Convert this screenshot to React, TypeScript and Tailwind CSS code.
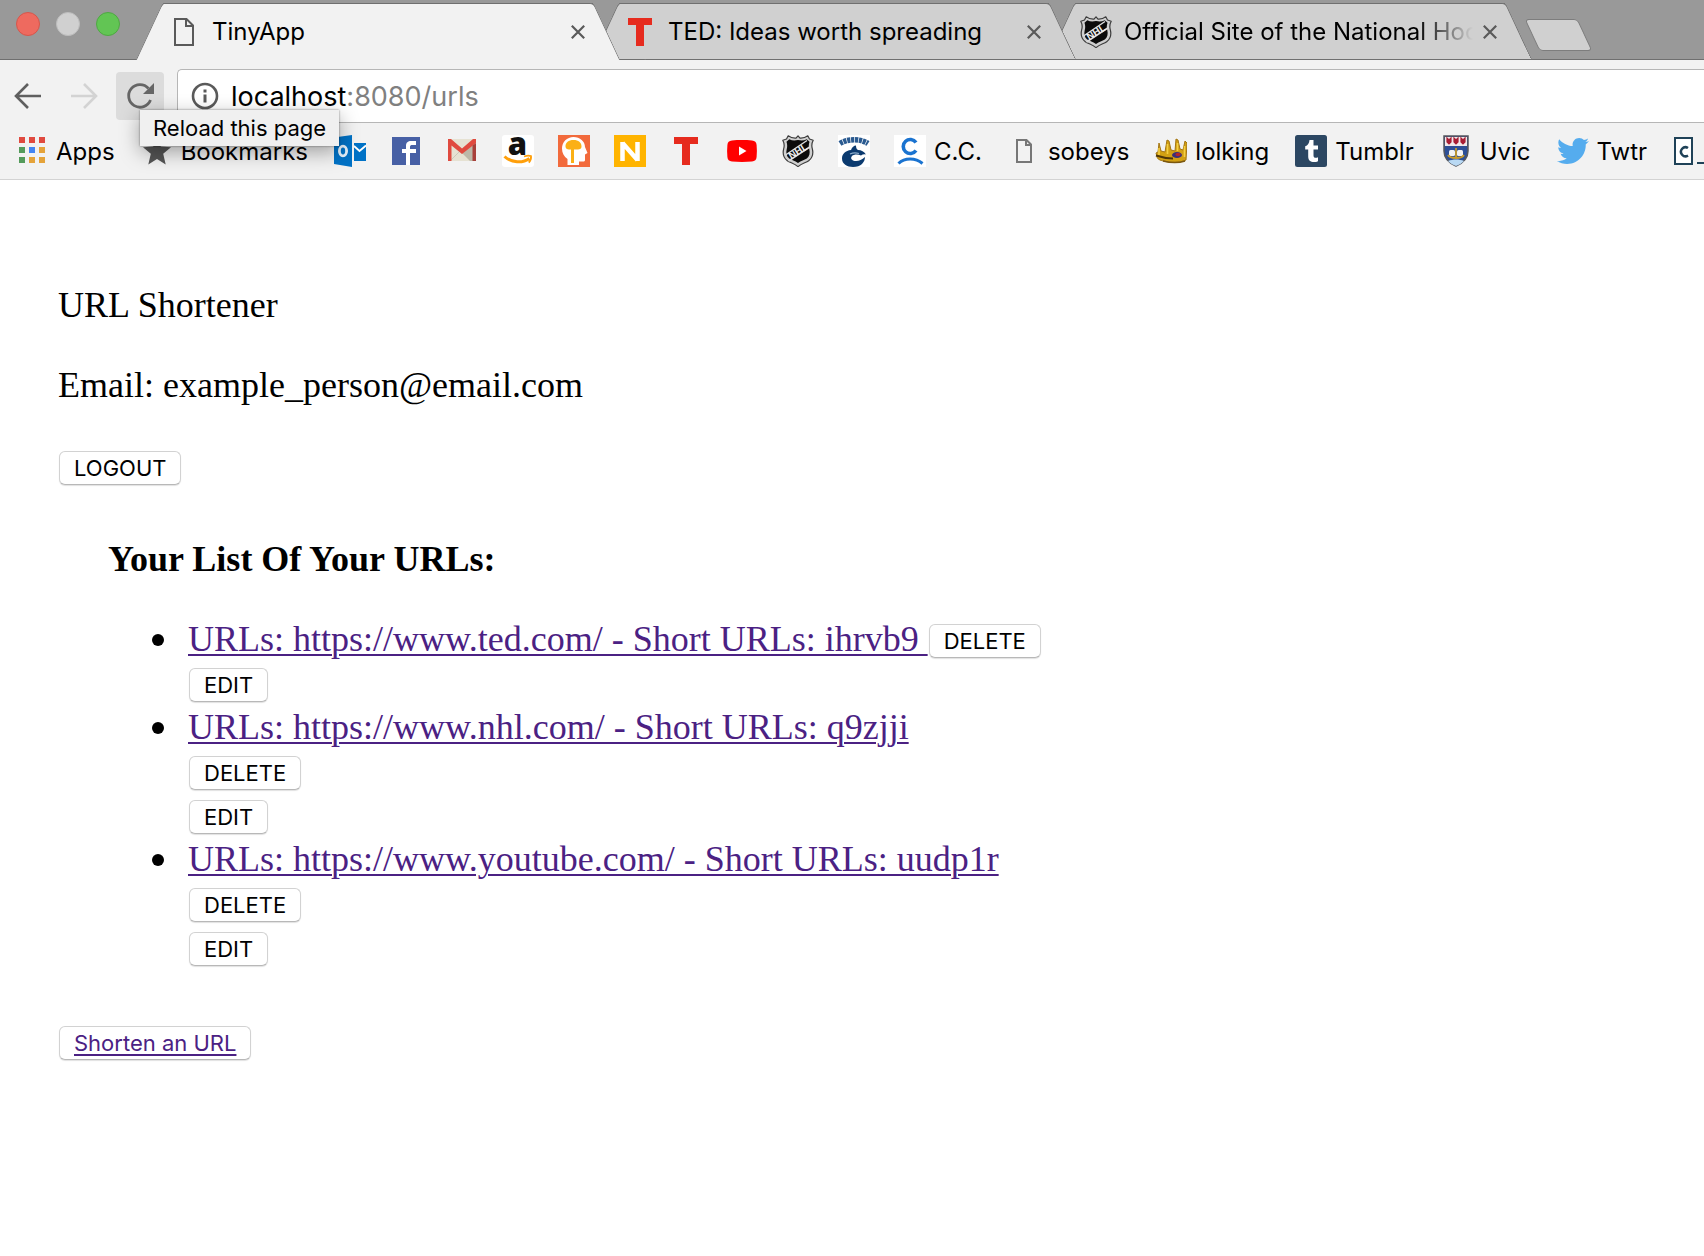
import type { ReactNode } from 'react'
import { FaTwitter } from 'react-icons/fa'

/* ---------- icons ---------- */

function DocIcon({ small = false }: { small?: boolean }) {
  return small ? (
    <svg viewBox="0 0 32 32" className="size-8 shrink-0" fill="none" stroke="#777" strokeWidth="2" aria-hidden="true">
      <path d="M9 5h9.5l4.500 4.500V27H9z" />
      <path d="M18 5v5h5" />
    </svg>
  ) : (
    <svg viewBox="0 0 32 32" className="size-8 shrink-0" fill="none" stroke="#5a5a5a" strokeWidth="2" aria-hidden="true">
      <path d="M7 3h11.500l6.500 6.500V29H7z" />
      <path d="M18 3v7h7" />
    </svg>
  )
}

function TedIcon() {
  return (
    <svg viewBox="0 0 32 32" className="size-8 shrink-0" aria-hidden="true">
      <path fill="#e62b1e" d="M4 2h24v7h-8v21h-8V9H4z" />
    </svg>
  )
}

function NhlIcon() {
  const shield =
    'M16 .8l2 2.300c3 .2 5.200-.3 7.800-2.300l1.700 3.200 3.700 1.300c-1.600 3-1.800 5.400-.9 8.400 1 4 .4 9-3.600 12-3 2.200-6.600 2.300-10.700 5.900-4.100-3.600-7.700-3.700-10.700-5.900-4-3-4.600-8-3.600-12 .9-3 .7-5.400-.9-8.400l3.700-1.300 1.700-3.200c2.600 2 4.800 2.500 7.800 2.300z'
  return (
    <svg viewBox="0 0 32 32" className="size-8 shrink-0" aria-hidden="true">
      <path d={shield} fill="#cfcfcf" stroke="#3d3d3d" strokeWidth="1.200" strokeLinejoin="round" />
      <path
        d="M16 5c3.500.8 6 .6 8.700-.8l2.800 2.500c-.9 3-.9 5-.2 7.600.9 3.600.2 7.200-2.500 9.300-2.500 1.700-5.600 2-8.800 4.500-3.200-2.500-6.300-2.800-8.800-4.500-2.700-2.100-3.400-5.700-2.500-9.300.7-2.600.7-4.600-.2-7.600l2.800-2.500c2.700 1.400 5.200 1.600 8.700.8z"
        fill="#0b0b0b"
      />
      <path d="M3.500 20L25 5.500M6.500 26L28.500 11.500" stroke="#ddd" strokeWidth="1.500" />
      <text
        x="16"
        y="19.500"
        textAnchor="middle"
        transform="rotate(-33 16 16)"
        fontFamily="Liberation Sans, sans-serif"
        fontWeight="700"
        fontSize="10"
        fill="#eee"
      >
        NHL
      </text>
    </svg>
  )
}

function AppsIcon() {
  const colors = ['#e04a3f', '#e04a3f', '#e04a3f', '#549b5b', '#4285f4', '#e5a33a', '#549b5b', '#e5a33a', '#e5a33a']
  return (
    <svg viewBox="0 0 32 32" className="size-8 shrink-0" aria-hidden="true">
      {colors.map((c, i) => (
        <rect key={i} x={3 + (i % 3) * 10} y={2 + Math.floor(i / 3) * 10} width="6" height="6" fill={c} />
      ))}
    </svg>
  )
}

function StarIcon() {
  return (
    <svg viewBox="0 0 32 32" className="size-8 shrink-0" aria-hidden="true">
      <path fill="#555" d="M16 2l3.800 9.400 10.200.8-7.800 6.500 2.500 10.900-8.700-5.600-8.700 5.600 2.500-10.900L2 12.200l10.200-.8z" />
    </svg>
  )
}

function OutlookIcon() {
  return (
    <svg viewBox="0 0 32 32" className="size-8 shrink-0" aria-hidden="true">
      <path fill="#0072c6" d="M0 2.500L18 0v32L0 29z" />
      <rect x="20" y="8" width="12" height="18" fill="#0072c6" />
      <path d="M20 11l5.500 5L32 10.500" fill="none" stroke="#fff" strokeWidth="1.800" />
      <ellipse cx="9" cy="16" rx="3.600" ry="4.800" fill="none" stroke="#e3f0fa" strokeWidth="2.800" />
    </svg>
  )
}

function FacebookIcon() {
  return (
    <svg viewBox="0 0 32 32" className="size-8 shrink-0" aria-hidden="true">
      <rect x="2" y="2" width="28" height="28" fill="#4760a5" />
      <path fill="#fff" d="M16 30V18h-4v-4h4v-3c0-3.600 2-5 5-5h5v4h-3.500c-1.800 0-2.500.5-2.500 2v2h6v4h-6v12z" />
    </svg>
  )
}

function GmailIcon() {
  return (
    <svg viewBox="0 0 32 32" className="size-8 shrink-0" aria-hidden="true">
      <rect x="2" y="4" width="28" height="22" fill="#e6e2d3" />
      <path d="M4 26l9-9" stroke="#cdc9ba" strokeWidth="1" />
      <path d="M16 18L28 9v17h-4z" fill="#bcb8a8" />
      <path d="M2 4h3l11 9.500L27 4h3v4L16 19 5.500 10.500V26H2z" fill="#e04a3f" />
      <path d="M26.500 10.500L30 8v18h-3.500z" fill="#a8403a" />
    </svg>
  )
}

function AmazonIcon() {
  return (
    <svg viewBox="0 0 32 32" className="size-8 shrink-0" aria-hidden="true">
      <rect width="32" height="32" rx="3" fill="#fff" />
      <text x="15.500" y="19.500" textAnchor="middle" fontFamily="Open Sans, sans-serif" fontWeight="800" fontSize="31" fill="#111">
        a
      </text>
      <path d="M2.500 21.500c7 6.500 18 7 25 2" fill="none" stroke="#ff9f0a" strokeWidth="3" />
      <path d="M22 21.500c3-1 5.500-1 7-.4.3 2-.4 4.500-2.200 6.500" fill="none" stroke="#ff9f0a" strokeWidth="1.800" />
    </svg>
  )
}

function HeadIcon() {
  return (
    <svg viewBox="0 0 32 32" className="size-8 shrink-0" aria-hidden="true">
      <rect width="32" height="32" fill="#f26a3c" />
      <path fill="#fff" d="M9.500 30V24C6 21.500 4 18 4 13.500 4 7 9 2 15.500 2S27 6.500 27 12l2.500 6-2.500 1.500V25c0 1-.8 1.500-1.800 1.500H21V30z" />
      <path fill="#fbb016" d="M7.500 11.500C7.500 7.500 10.500 5 15.500 5s8 2.500 8 6.500c0 2.200-1.500 3-3.500 3h-4V28h-3V14.500h-2c-2 0-3.500-1-3.500-3z" />
    </svg>
  )
}

function LetterNIcon() {
  return (
    <svg viewBox="0 0 32 32" className="size-8 shrink-0" aria-hidden="true">
      <rect width="32" height="32" fill="#ffb400" />
      <path d="M8.500 26V7M23.500 26V7M8.500 8l15 17" fill="none" stroke="#fff" strokeWidth="4.500" />
    </svg>
  )
}

function YoutubeIcon() {
  return (
    <svg viewBox="0 0 32 32" className="size-8 shrink-0" aria-hidden="true">
      <path fill="#f00" d="M6 5.500c6-.6 14-.6 20 0 3 .3 4.300 1.500 4.600 4.500.4 4 .4 8 0 12-.3 3-1.600 4.200-4.600 4.500-6 .6-14 .6-20 0-3-.3-4.300-1.500-4.600-4.500-.4-4-.4-8 0-12 .3-3 1.600-4.200 4.600-4.500z" />
      <path fill="#fff" d="M13 11.500l7.500 4.500-7.500 4.500z" />
    </svg>
  )
}

function CanucksIcon() {
  return (
    <svg viewBox="0 0 32 32" className="size-8 shrink-0" aria-hidden="true">
      <rect width="32" height="32" fill="#fff" />
      <path d="M2 8.500c8-5 20-5 28 0" fill="none" stroke="#2a5a90" strokeWidth="5.500" strokeDasharray="3.200 .7" />
      <path
        fill="#0b3a6f"
        d="M13 15c1-3 3-4.500 5-4.500 0 2 .5 3.500 2 4.500 3.500 0 6 1.500 8 4.500-2-.5-3.500 0-5 1-3-1.500-7-1.500-9 .5-1.500 1.500-1 3.500 1 4.500 4 1.500 8 0 12-3.500 0 5-4 10-12 10-6 0-11-3-11-8.500C4 19 7.500 15.500 13 15z"
      />
      <path d="M12 19c3-1.500 6-1.500 9-.5" stroke="#8fb0cf" strokeWidth="1.200" fill="none" />
    </svg>
  )
}

function PersonIcon() {
  return (
    <svg viewBox="0 0 32 32" className="size-8 shrink-0" fill="none" stroke="#1a73d0" aria-hidden="true">
      <rect width="32" height="32" fill="#fff" stroke="none" />
      <path d="M22 7.500a7 7 0 1 0 0 8" strokeWidth="3.600" />
      <path d="M4.500 28.500c6-6 17-6 24 0" strokeWidth="3" />
    </svg>
  )
}

function CrownIcon() {
  return (
    <svg viewBox="0 0 32 32" className="size-8 shrink-0" aria-hidden="true">
      <path
        fill="#d2a013"
        stroke="#a37512"
        strokeWidth="1"
        d="M1 18l2-1 1-9 2 8 4 1 2-12 2 1 2 9 4 1 1-12 2 1 2 9 3 1 2-9 2 2-1 17c-6 3-16 3-22 1-4-.5-7-2-7-4.500z"
      />
      <path d="M4 13v7M12.500 9v10M22.500 8v8M29.500 11v11" stroke="#f4cf45" strokeWidth="1.600" />
      <path d="M1 20.500c6 2 12 3 17 3" stroke="#4f3608" strokeWidth="2" fill="none" />
      <path d="M8 26c8 2 16 2 22 0" stroke="#7a570f" strokeWidth="1.600" fill="none" />
      <ellipse cx="22" cy="20" rx="5" ry="3" fill="#3b2f7a" />
      <ellipse cx="23" cy="19.500" rx="2.500" ry="1.800" fill="#b3242c" />
    </svg>
  )
}

function TumblrIcon() {
  return (
    <svg viewBox="0 0 32 32" className="size-8 shrink-0" aria-hidden="true">
      <rect width="32" height="32" rx="2.500" fill="#2c4762" />
      <path fill="#fff" d="M14.500 5h4v5.500h4.500v4h-4.500v6c0 1.700.8 2.300 2.300 2.300.9 0 1.500-.2 2.200-.6v4c-1.200.6-2.400.9-4 .9-3.600 0-5.800-1.800-5.800-5.600v-7h-3v-3.200c2.700-.9 4-3 4.300-6.300z" />
    </svg>
  )
}

function CrestIcon() {
  return (
    <svg viewBox="0 0 32 32" className="size-8 shrink-0" aria-hidden="true">
      <path d="M4 1h24v15c0 7-5 12-12 15C9 28 4 23 4 16z" fill="#2d4f96" stroke="#55575e" strokeWidth="1.500" />
      <path d="M5 2h22v9H5z" fill="#f1e9ea" />
      <path d="M7 3v4l2 2 2-2V3l-2 2zM14 3v4l2 2 2-2V3l-2 2zM21 3v4l2 2 2-2V3l-2 2z" fill="#a81e35" stroke="#a81e35" strokeWidth="1.200" />
      <path d="M8 26c5-2 11-2 16 0-2 2-5 4-8 5-3-1-6-3-8-5z" fill="#b9d9f3" />
      <rect x="9" y="15" width="6" height="6" rx="1.500" fill="#f2f2f2" />
      <rect x="17" y="15" width="6" height="6" rx="1.500" fill="#f2f2f2" />
      <path d="M8 20c2 4 14 4 16 0M16 13v11" stroke="#c79a2c" strokeWidth="1.800" fill="none" />
    </svg>
  )
}

function CodeIcon() {
  return (
    <svg viewBox="0 0 32 32" className="size-8 shrink-0" fill="none" stroke="#1f4258" aria-hidden="true">
      <path d="M2 3h17v26H2z" strokeWidth="2" fill="#fff" />
      <path d="M15 13a4.500 4.500 0 1 0 0 7.500" strokeWidth="2.500" />
      <path d="M24 28h8" strokeWidth="2" />
    </svg>
  )
}

function ArrowIcon({ forward = false }: { forward?: boolean }) {
  return (
    <svg viewBox="0 0 32 32" className="size-8" fill="none" stroke={forward ? '#d3d3d3' : '#5f5f5f'} strokeWidth="2.600" aria-hidden="true">
      {forward ? <path d="M3 16h24M16 4l12 12-12 12" /> : <path d="M29 16H5M16 4L4 16l12 12" />}
    </svg>
  )
}

function ReloadIcon() {
  return (
    <svg viewBox="0 0 32 32" className="size-8" aria-hidden="true">
      <path d="M26.500 20A11.300 11.300 0 1 1 24.500 8.500" fill="none" stroke="#666" strokeWidth="2.800" />
      <path d="M30 3v11H19z" fill="#666" />
    </svg>
  )
}

function InfoIcon() {
  return (
    <svg viewBox="0 0 28 28" className="size-7 shrink-0" aria-hidden="true">
      <circle cx="14" cy="14" r="12" fill="none" stroke="#5a5a5a" strokeWidth="2.600" />
      <path d="M14 7.500v3M14 12.500v8" stroke="#5a5a5a" strokeWidth="3" />
    </svg>
  )
}

/* ---------- browser chrome ---------- */

type TabProps = { title: string; icon: ReactNode; active?: boolean; fade?: boolean; order: string }

function Tab({ title, icon, active = false, fade = false, order }: TabProps) {
  const edge = active ? 'bg-[#f2f2f2] border-[#6f6f6f]' : 'bg-[#d0d0d0] border-[#6f6f6f] border-b'
  return (
    <div className={`relative h-[57px] w-[484px] min-w-0 not-first:-ml-7 ${order}`}>
      <span className={`absolute inset-y-0 right-10 left-[13px] -skew-x-[25deg] rounded-tl-[4px] border-t border-l ${edge}`} />
      <span className={`absolute inset-y-0 right-[13px] left-10 skew-x-[25deg] rounded-tr-[4px] border-t border-r ${edge}`} />
      <div className="relative flex h-full items-center pr-[35px] pl-8">
        <button type="button" className="flex min-w-0 flex-1 items-center gap-3 text-left">
          {icon}
          <span
            className={`min-w-0 flex-1 overflow-hidden whitespace-nowrap ${
              fade ? '[mask-image:linear-gradient(to_right,black_calc(100%-56px),transparent)]' : ''
            }`}
          >
            {title}
          </span>
        </button>
        <button type="button" aria-label={`Close ${title}`} className="ml-2.5 shrink-0">
          <svg viewBox="0 0 14 14" className="size-3.5" stroke="#5a5a5a" strokeWidth="2.200" aria-hidden="true">
            <path d="M.8.8l12.400 12.400M13.200.8L.8 13.200" />
          </svg>
        </button>
      </div>
    </div>
  )
}

const bookmarks: { name: string; label?: string; icon: ReactNode }[] = [
  { name: 'Apps', label: 'Apps', icon: <AppsIcon /> },
  { name: 'Bookmarks', label: 'Bookmarks', icon: <StarIcon /> },
  { name: 'Outlook', icon: <OutlookIcon /> },
  { name: 'Facebook', icon: <FacebookIcon /> },
  { name: 'Gmail', icon: <GmailIcon /> },
  { name: 'Amazon', icon: <AmazonIcon /> },
  { name: 'Lumosity', icon: <HeadIcon /> },
  { name: 'N', icon: <LetterNIcon /> },
  { name: 'TED', icon: <TedIcon /> },
  { name: 'YouTube', icon: <YoutubeIcon /> },
  { name: 'NHL', icon: <NhlIcon /> },
  { name: 'Canucks', icon: <CanucksIcon /> },
  { name: 'C.C.', label: 'C.C.', icon: <PersonIcon /> },
  { name: 'sobeys', label: 'sobeys', icon: <DocIcon small /> },
  { name: 'lolking', label: 'lolking', icon: <CrownIcon /> },
  { name: 'Tumblr', label: 'Tumblr', icon: <TumblrIcon /> },
  { name: 'Uvic', label: 'Uvic', icon: <CrestIcon /> },
  { name: 'Twtr', label: 'Twtr', icon: <FaTwitter className="size-8 shrink-0 text-[#55acee]" aria-hidden="true" /> },
  { name: 'Code', icon: <CodeIcon /> },
]

function BrowserChrome() {
  return (
    <header className="bg-[#f2f2f2] font-[Inter,sans-serif] text-[24px] leading-8 text-black">
      <div className="flex h-[60px] items-end border-b border-[#6f6f6f] bg-[#999]">
        <div className="flex w-[136px] shrink-0 gap-4 self-start pt-3 pl-4">
          <button type="button" aria-label="Close window" className="size-6 rounded-full border border-[#d5564c] bg-[#ee6a5f]" />
          <button type="button" aria-label="Minimize window" className="size-6 rounded-full border border-[#bdbdbd] bg-[#d0d0d0]" />
          <button type="button" aria-label="Zoom window" className="size-6 rounded-full border border-[#4fa843] bg-[#62c554]" />
        </div>
        <nav aria-label="Tabs" className="-mb-px flex min-w-0">
          <Tab title="TinyApp" icon={<DocIcon />} active order="z-30" />
          <Tab title="TED: Ideas worth spreading" icon={<TedIcon />} order="z-20" />
          <Tab title="Official Site of the National Hockey League" icon={<NhlIcon />} fade order="z-10" />
        </nav>
        <button
          type="button"
          aria-label="New tab"
          className="mb-2 h-8 w-[53px] shrink-0 skew-x-[25deg] rounded-[4px] border border-[#7d7d7d] bg-[#d0d0d0]"
        />
      </div>

      <div className="flex items-center gap-[13px] pt-[9px] pl-1">
        <div className="flex gap-2">
          <button type="button" aria-label="Back" className="flex size-12 items-center justify-center">
            <ArrowIcon />
          </button>
          <button type="button" aria-label="Forward" className="flex size-12 items-center justify-center">
            <ArrowIcon forward />
          </button>
          <div className="relative">
            <button type="button" aria-label="Reload" aria-describedby="reload-tip" className="flex size-12 items-center justify-center rounded-[4px] bg-[#dcdcdc]">
              <ReloadIcon />
            </button>
            <div
              id="reload-tip"
              role="tooltip"
              className="absolute top-[38px] left-6 z-40 bg-[#f0f0f0] px-[13px] text-[22px] leading-9 whitespace-nowrap shadow-[0_0_2px_rgba(0,0,0,0.45),0_6px_20px_rgba(0,0,0,0.35)]"
            >
              Reload this page
            </div>
          </div>
        </div>
        <div className="flex h-[54px] flex-1 items-center gap-3 rounded-l-[5px] border-y border-l border-[#b6b6b6] bg-white pl-[13px] text-[27px]">
          <InfoIcon />
          <a href="#address" className="pt-0.5 whitespace-nowrap text-black">
            localhost<span className="text-[#808080]">:8080/urls</span>
          </a>
        </div>
      </div>

      <nav aria-label="Bookmarks" className="flex h-[57px] items-center gap-6 overflow-hidden border-b border-[#d3d3d3] pl-4">
        {bookmarks.map((b) => (
          <a key={b.name} href="#bookmark" aria-label={b.name} className="flex h-9 shrink-0 items-center gap-2">
            {b.icon}
            {b.label && <span className="pt-0.5 pr-0.5">{b.label}</span>}
          </a>
        ))}
      </nav>
    </header>
  )
}

/* ---------- page ---------- */

const pushButton =
  'mx-px h-[34px] rounded-[6px] border border-[#d2d2d2] border-b-[#b8b8b8] bg-white px-[14px] font-[Inter,sans-serif] text-[22px] leading-8 shadow-[0_1px_1px_rgba(0,0,0,0.12)]'

function PushButton({ children }: { children: ReactNode }) {
  return (
    <button type="button" className={`${pushButton} text-black`}>
      {children}
    </button>
  )
}

const urls = [
  { long: 'https://www.ted.com/', short: 'ihrvb9', inline: true },
  { long: 'https://www.nhl.com/', short: 'q9zjji', inline: false },
  { long: 'https://www.youtube.com/', short: 'uudp1r', inline: false },
]

export default function App() {
  return (
    <div className="min-h-screen bg-white">
      <BrowserChrome />
      <main className="px-[58px] pt-[105px] pb-16 font-['Liberation_Serif',serif] text-[36px] leading-10 text-black">
        <p>URL Shortener</p>
        <p className="mt-10">Email: example_person@email.com</p>
        <form className="mt-[46px] flex" onSubmit={(e) => e.preventDefault()}>
          <PushButton>LOGOUT</PushButton>
        </form>

        <section className="mt-[54px] pl-[50px]">
          <h1 className="font-bold">Your List Of Your URLs:</h1>
          <ul className="mt-10 pl-11">
            {urls.map((u) => (
              <li key={u.short} className="flex gap-6">
                <span className="mt-[15px] size-3 shrink-0 rounded-full bg-black" />
                <div>
                  <div className="flex h-11">
                    <a
                      href="#url"
                      className="leading-10 whitespace-pre text-[#4b2183] underline decoration-2 underline-offset-[3px]"
                    >
                      {`URLs: ${u.long} - Short URLs: ${u.short}${u.inline ? ' ' : ''}`}
                    </a>
                    {u.inline && (
                      <div className="flex items-center">
                        <PushButton>DELETE</PushButton>
                      </div>
                    )}
                  </div>
                  {!u.inline && (
                    <div className="flex h-11 items-center">
                      <PushButton>DELETE</PushButton>
                    </div>
                  )}
                  <div className="flex h-11 items-center">
                    <PushButton>EDIT</PushButton>
                  </div>
                </div>
              </li>
            ))}
          </ul>
        </section>

        <div className="mt-[55px] flex">
          <a href="#new" className={`${pushButton} text-[#4b2183] underline decoration-2 underline-offset-[3px]`}>
            Shorten an URL
          </a>
        </div>
      </main>
    </div>
  )
}
